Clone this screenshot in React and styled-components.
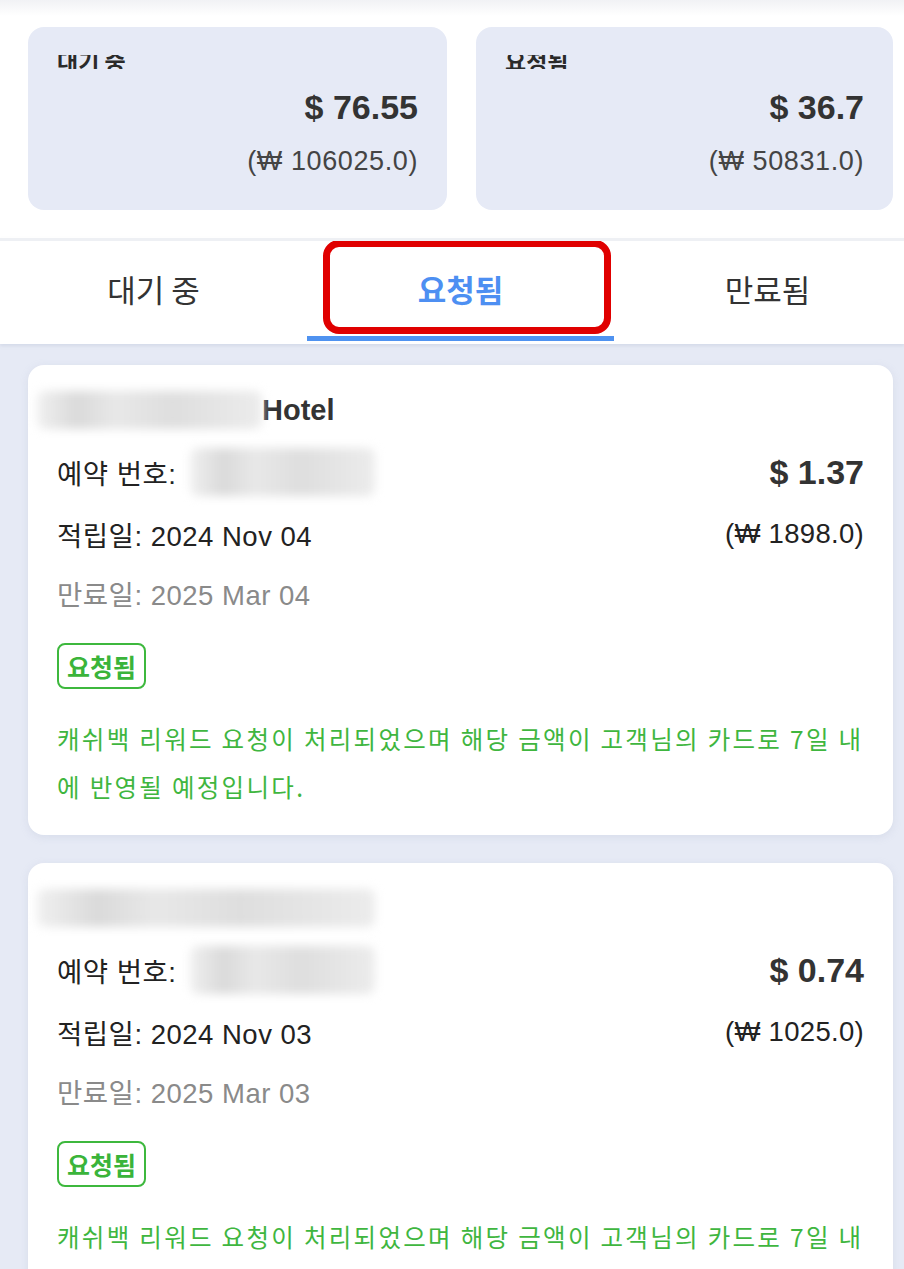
import React from "react";
import styled, { createGlobalStyle } from "styled-components";

const Global = createGlobalStyle`
  html, body { margin: 0; padding: 0; background: #e6eaf5; }
  body { font-family: "Liberation Sans", "Noto Sans CJK KR", sans-serif; color: #222; }
  * { box-sizing: border-box; }
`;

const Page = styled.div`
  width: 904px;
  min-height: 1269px;
  background: #e6eaf5;
  overflow: hidden;
`;

const Top = styled.div`
  background: linear-gradient(#f1f2f5 0px, #ffffff 16px);
  padding: 27px 11px 28px 28px;
  display: flex;
  gap: 29px;
`;

const SumCard = styled.div`
  width: ${p => p.$w}px;
  height: 183px;
  background: #e6eaf6;
  border-radius: 16px;
  padding: 28px 29px 0 29px;
  display: flex;
  flex-direction: column;
`;

const LabelClip = styled.div`
  height: 14px;
  overflow: hidden;
  display: flex;
  align-items: flex-end;
`;

const Label = styled.span`
  font-family: "Noto Sans CJK KR", sans-serif;
  font-size: 23px;
  line-height: 24px;
  font-weight: 700;
  color: #2a2a2a;
  flex: none;
  margin-bottom: -3px;
`;

const BigAmount = styled.div`
  margin-top: 17px;
  text-align: right;
  font-size: 34px;
  line-height: 42px;
  font-weight: 700;
  color: #333;
`;

const WonAmount = styled.div`
  margin-top: 17px;
  text-align: right;
  font-size: 27px;
  line-height: 32px;
  letter-spacing: 0.6px;
  color: #444;
`;

const TabBar = styled.div`
  position: relative;
  border-top: 3px solid #eef0f4;
  background: #fff;
  height: 106px;
  display: flex;
  overflow: hidden;
  box-shadow: 0 2px 3px rgba(180, 190, 210, 0.35);
`;

const Tab = styled.div`
  flex: none;
  width: 307px;
  height: 100px;
  display: flex;
  align-items: center;
  justify-content: center;
  font-family: "Noto Sans CJK KR", sans-serif;
  font-size: 31px;
  font-weight: ${p => (p.$active ? 700 : 400)};
  color: ${p => (p.$active ? "#4d8ff2" : "#333")};
  border-bottom: 5px solid ${p => (p.$active ? "#4f92f0" : "transparent")};
`;

const Highlight = styled.div`
  position: absolute;
  left: 323px;
  top: -1px;
  width: 288px;
  height: 94px;
  border: 7px solid #e00000;
  border-radius: 16px;
  pointer-events: none;
`;

const List = styled.div`
  padding: 21px 11px 0 28px;
  display: flex;
  flex-direction: column;
  gap: 28px;
`;

const Card = styled.div`
  background: #fff;
  border-radius: 16px;
  box-shadow: 0 2px 8px rgba(150, 160, 190, 0.18);
  padding: 27px 29px 24px 29px;
  display: flex;
  flex-direction: column;
`;

const NameRow = styled.div`
  display: flex;
  align-items: center;
  height: 36px;
  font-size: 29px;
  font-weight: 700;
  color: #333;
`;

const Blur = styled.span`
  display: inline-block;
  flex: none;
  width: ${p => p.$w}px;
  height: ${p => p.$h}px;
  margin-left: ${p => p.$ml || 0}px;
  background: linear-gradient(90deg, #f0f0f0 0%, #dadada 18%, #e8e8e8 35%, #dedede 60%, #ececec 100%);
  filter: blur(5px);
  border-radius: 8px;
`;

const Row = styled.div`
  display: flex;
  align-items: center;
  justify-content: space-between;
  height: ${p => p.$h || 36}px;
  margin-top: ${p => p.$mt}px;
`;

const RowLeft = styled.div`
  display: flex;
  align-items: center;
  font-size: 27.5px;
  letter-spacing: 0.5px;
  color: ${p => (p.$muted ? "#8a8a8a" : "#222")};
`;

const CardAmount = styled.div`
  font-size: 34px;
  font-weight: 700;
  color: #333;
`;

const CardWon = styled.div`
  font-size: 27.5px;
  letter-spacing: 0.3px;
  color: #222;
`;

const Badge = styled.div`
  align-self: flex-start;
  margin-top: 32px;
  height: 46px;
  padding: 0 8px;
  border: 2px solid #3db83d;
  border-radius: 8px;
  display: flex;
  align-items: center;
  font-family: "Noto Sans CJK KR", sans-serif;
  font-size: 25px;
  font-weight: 700;
  color: #3ab43a;
`;

const Message = styled.div`
  margin-top: 26px;
  font-family: "Noto Sans CJK KR", sans-serif;
  font-size: 24.5px;
  letter-spacing: 2.3px;
  line-height: 48px;
  color: #3fb63f;
`;

const items = [
  { name: "Hotel", blurW: 225, amount: "$ 1.37", won: "(₩ 1898.0)", earned: "2024 Nov 04", expires: "2025 Mar 04" },
  { name: "", blurW: 338, amount: "$ 0.74", won: "(₩ 1025.0)", earned: "2024 Nov 03", expires: "2025 Mar 03" },
];

export default function App() {
  return (
    <Page>
      <Global />
      <Top>
        <SumCard $w={419}>
          <LabelClip><Label>대기 중</Label></LabelClip>
          <BigAmount>$ 76.55</BigAmount>
          <WonAmount>(₩ 106025.0)</WonAmount>
        </SumCard>
        <SumCard $w={417}>
          <LabelClip><Label>요청됨</Label></LabelClip>
          <BigAmount>$ 36.7</BigAmount>
          <WonAmount>(₩ 50831.0)</WonAmount>
        </SumCard>
      </Top>
      <TabBar>
        <Tab>대기 중</Tab>
        <Tab $active>요청됨</Tab>
        <Tab>만료됨</Tab>
        <Highlight />
      </TabBar>
      <List>
        {items.map((it, i) => (
          <Card key={i}>
            <NameRow>
              <Blur $w={it.blurW} $h={38} $ml={-20} />
              {it.name}
            </NameRow>
            <Row $h={44} $mt={22}>
              <RowLeft>
                예약 번호:
                <Blur $w={185} $h={48} $ml={14} />
              </RowLeft>
              <CardAmount>{it.amount}</CardAmount>
            </Row>
            <Row $mt={22}>
              <RowLeft>적립일: {it.earned}</RowLeft>
              <CardWon>{it.won}</CardWon>
            </Row>
            <Row $mt={23}>
              <RowLeft $muted>만료일: {it.expires}</RowLeft>
            </Row>
            <Badge>요청됨</Badge>
            <Message>캐쉬백 리워드 요청이 처리되었으며 해당 금액이 고객님의 카드로 7일 내에 반영될 예정입니다.</Message>
          </Card>
        ))}
      </List>
    </Page>
  );
}
